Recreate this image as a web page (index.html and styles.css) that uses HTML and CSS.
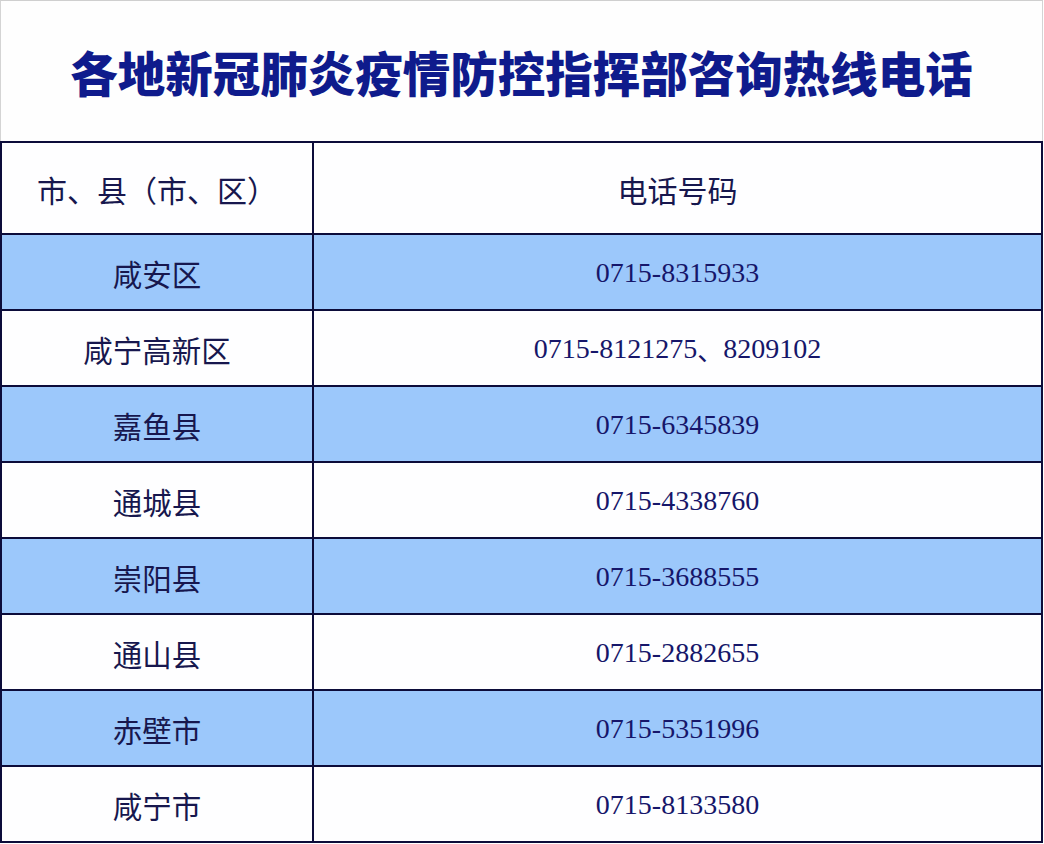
FILE: index.html
```html
<!DOCTYPE html>
<html lang="zh-CN">
<head>
<meta charset="utf-8">
<title>各地新冠肺炎疫情防控指挥部咨询热线电话</title>
<link rel="stylesheet" href="styles.css">
</head>
<body>
<div class="page">
  <div class="title-box">
    <h1 class="title">各地新冠肺炎疫情防控指挥部咨询热线电话</h1>
  </div>
  <div class="grid">
    <div class="cell head">市、县（市、区）</div>
    <div class="cell head">电话号码</div>

    <div class="cell name blue">咸安区</div>
    <div class="cell num blue">0715-8315933</div>

    <div class="cell name">咸宁高新区</div>
    <div class="cell num">0715-8121275<span class="sep">、</span>8209102</div>

    <div class="cell name blue">嘉鱼县</div>
    <div class="cell num blue">0715-6345839</div>

    <div class="cell name">通城县</div>
    <div class="cell num">0715-4338760</div>

    <div class="cell name blue">崇阳县</div>
    <div class="cell num blue">0715-3688555</div>

    <div class="cell name">通山县</div>
    <div class="cell num">0715-2882655</div>

    <div class="cell name blue">赤壁市</div>
    <div class="cell num blue">0715-5351996</div>

    <div class="cell name">咸宁市</div>
    <div class="cell num">0715-8133580</div>
  </div>
</div>
</body>
</html>
```

FILE: styles.css
```css
html, body {
  margin: 0;
  padding: 0;
  background: #ffffff;
  overflow: hidden;
}

.page {
  width: 1043px;
}

.title-box {
  height: 141px;
  border-top: 1px solid #cfcfcf;
  border-left: 1px solid #d4d4d4;
  border-right: 1px solid #d4d4d4;
  box-sizing: border-box;
  display: flex;
  align-items: center;
  justify-content: center;
  background: #fefefe;
}

.title {
  margin: 0;
  padding-top: 2px;
  font-family: "Noto Sans CJK SC", "Noto Sans", sans-serif;
  font-weight: 900;
  font-size: 47.5px;
  line-height: 1;
  color: #0f1b8c;
  letter-spacing: 0;
}

.grid {
  display: grid;
  grid-template-columns: 310px 1fr;
  grid-template-rows: 90px;
  grid-auto-rows: 74px;
  gap: 2px;
  padding: 2px;
  background: #0c0c3a;
  width: 1043px;
  box-sizing: border-box;
}

.cell {
  background: #fefeff;
  display: flex;
  align-items: center;
  justify-content: center;
  color: #17174e;
}

.cell.blue {
  background: #9cc8fb;
}

.head {
  font-family: "Noto Sans CJK SC", "Noto Sans", sans-serif;
  font-size: 30px;
  font-weight: 400;
  padding-top: 2px;
}

.name {
  font-family: "Noto Sans CJK SC", "Noto Sans", sans-serif;
  font-size: 29.5px;
  font-weight: 400;
  padding-top: 1px;
}

.num {
  font-family: "Liberation Serif", "Times New Roman", serif;
  font-size: 28px;
  color: #16166a;
  padding-top: 2px;
}

.sep {
  font-family: "Noto Sans CJK SC", sans-serif;
  font-size: 26px;
}
```
